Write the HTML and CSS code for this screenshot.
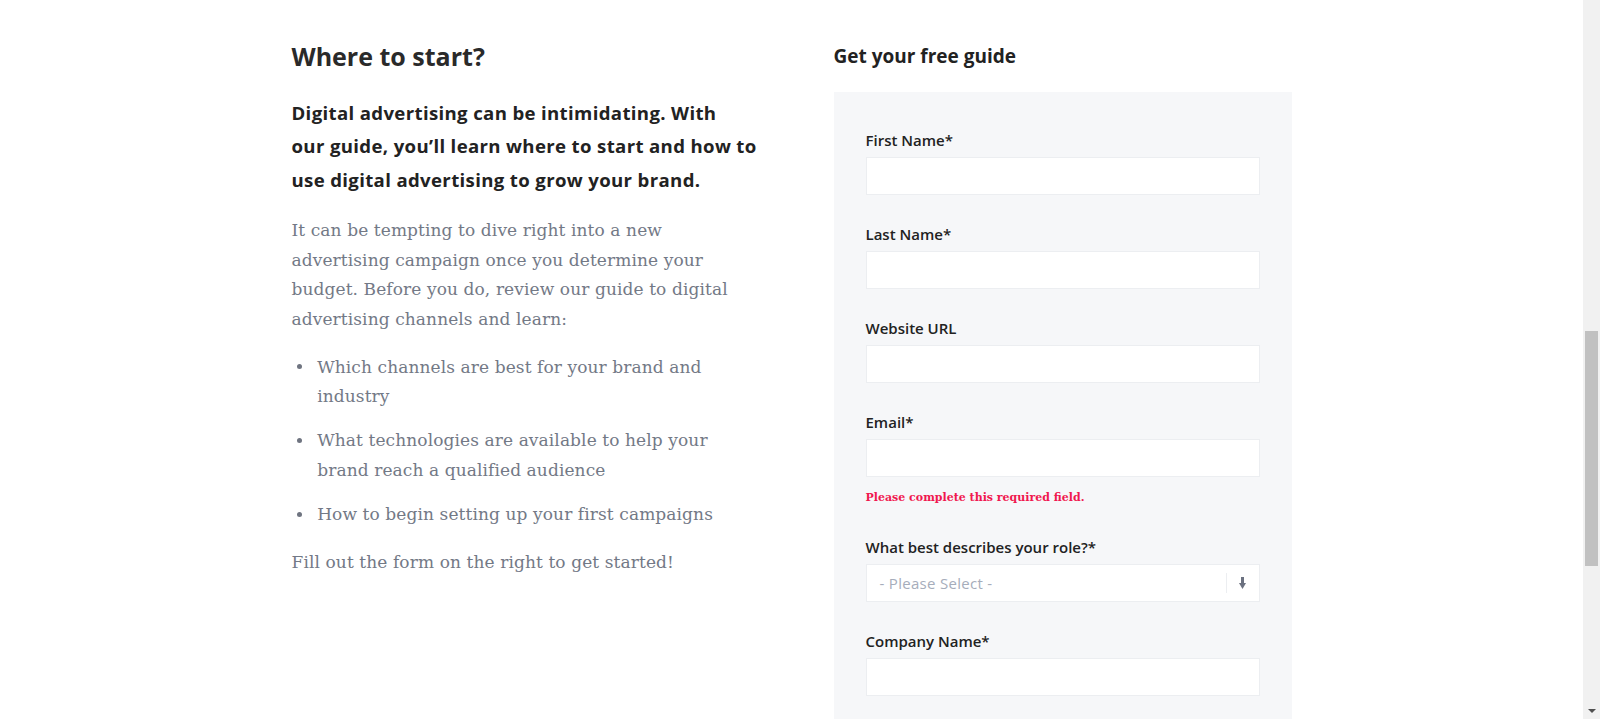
FILE: index.html
```html
<!DOCTYPE html>
<html lang="en">
<head>
    <meta charset="UTF-8">
    <title>Where to start? - Free Digital Advertising Guide</title>
    <link rel="stylesheet" href="styles.css">
</head>
<body>
    <div class="page">
        <main class="content">
            <section class="guide">
                <div class="intro">
                    <h2>Where to start?</h2>
                    <p class="lead">Digital advertising can be intimidating. With<br> our guide, you’ll learn where to start and how to use digital advertising to grow your brand.</p>
                    <p>It can be tempting to dive right into a new advertising campaign once you determine your budget. Before you do, review our guide to digital advertising channels and learn:</p>
                    <ul>
                        <li>Which channels are best for your brand and industry</li>
                        <li>What technologies are available to help your brand reach a qualified audience</li>
                        <li>How to begin setting up your first campaigns</li>
                    </ul>
                    <p>Fill out the form on the right to get started!</p>
                </div>

                <div class="signup">
                    <h3>Get your free guide</h3>
                    <form class="form-box">
                        <div class="field">
                            <label for="firstname">First Name*</label>
                            <input type="text" id="firstname">
                        </div>
                        <div class="field">
                            <label for="lastname">Last Name*</label>
                            <input type="text" id="lastname">
                        </div>
                        <div class="field">
                            <label for="website">Website URL</label>
                            <input type="text" id="website">
                        </div>
                        <div class="field">
                            <label for="email">Email*</label>
                            <input type="email" id="email">
                            <div class="error">Please complete this required field.</div>
                        </div>
                        <div class="field">
                            <label for="role">What best describes your role?*</label>
                            <div class="select" id="role">
                                <span class="placeholder">- Please Select -</span>
                                <span class="select-arrow">
                                    <svg width="7" height="12" viewBox="0 0 7 12">
                                        <rect x="2" y="0" width="3" height="7" fill="#6b7180"/>
                                        <polygon points="0,6 7,6 3.5,12" fill="#6b7180"/>
                                    </svg>
                                </span>
                            </div>
                        </div>
                        <div class="field">
                            <label for="company">Company Name*</label>
                            <input type="text" id="company">
                        </div>
                    </form>
                </div>
            </section>
        </main>

        <!-- fake window scrollbar -->
        <div class="scrollbar">
            <div class="thumb"></div>
            <div class="down"></div>
        </div>
    </div>
</body>
</html>
```

FILE: styles.css
```css
body {
    margin: 0;
    background: #fff;
}

.page {
    display: flex;
    height: 100vh;
    overflow: hidden;
}

.content {
    flex: 1;
}

.guide {
    width: 1000px;
    margin: 0 auto;
    padding-top: 40px;
    display: grid;
    grid-template-columns: 458px 458px;
    justify-content: space-between;
}

/* left column */
.intro h2 {
    font-family: "Open Sans", sans-serif;
    font-weight: 700;
    font-size: 25px;
    line-height: 32px;
    color: #2a2a2a;
    margin: 0 0 24px;
}

.intro p {
    font-family: "DejaVu Serif", serif;
    font-size: 17px;
    letter-spacing: 0.1px;
    line-height: 29.7px;
    color: #737986;
    margin: 0 0 18px;
}

.intro p.lead {
    font-family: "Open Sans", sans-serif;
    font-weight: 700;
    font-size: 18.6px;
    letter-spacing: 0.35px;
    line-height: 33.3px;
    color: #222;
    margin: 0 -16px 20px 0;
}

.intro ul {
    list-style: none;
    padding: 0;
    margin: 0 0 18px;
}

.intro li {
    display: grid;
    grid-template-columns: 25.7px 1fr;
    font-family: "DejaVu Serif", serif;
    font-size: 17px;
    letter-spacing: 0.1px;
    line-height: 29.7px;
    color: #737986;
    margin-bottom: 14.3px;
}

.intro li::before {
    content: "";
    width: 5px;
    height: 5px;
    border-radius: 50%;
    background: #6f7480;
    margin: 11.5px 0 0 5.8px;
}

/* right column */
.signup h3 {
    font-family: "Open Sans", sans-serif;
    font-weight: 700;
    font-size: 19px;
    line-height: 24px;
    color: #222;
    margin: 4px 0 24px;
}

.form-box {
    background: #f6f7f9;
    padding: 38px 32px 40px;
}

.field {
    margin-bottom: 29px;
}

.field label {
    display: block;
    font-family: "Open Sans", sans-serif;
    font-weight: 600;
    font-size: 15px;
    line-height: 20px;
    color: #222;
    margin-bottom: 7px;
}

.field input,
.select {
    display: block;
    box-sizing: border-box;
    width: 100%;
    height: 38px;
    background: #fff;
    border: 1px solid #eceef1;
    outline: none;
}

.error {
    font-family: "DejaVu Serif", serif;
    font-weight: 700;
    font-size: 11px;
    line-height: 16px;
    color: #f0184f;
    margin-top: 13px;
    padding-bottom: 2px;
}

.select {
    display: flex;
    align-items: center;
}

.placeholder {
    flex: 1;
    padding-left: 13px;
    font-family: "Open Sans", sans-serif;
    font-size: 15px;
    letter-spacing: 0.3px;
    color: #a6adbb;
}

.select-arrow {
    width: 32px;
    height: 20px;
    border-left: 1px solid #eceef1;
    display: flex;
    justify-content: center;
    align-items: center;
}

/* scrollbar */
.scrollbar {
    width: 17px;
    background: #f1f1f1;
    display: flex;
    flex-direction: column;
    align-items: center;
}

.thumb {
    width: 13px;
    height: 235px;
    margin-top: 331px;
    background: #c1c1c1;
}

.down {
    margin-top: auto;
    margin-bottom: 6px;
    width: 0;
    height: 0;
    border-left: 4px solid transparent;
    border-right: 4px solid transparent;
    border-top: 4px solid #505050;
}
```
